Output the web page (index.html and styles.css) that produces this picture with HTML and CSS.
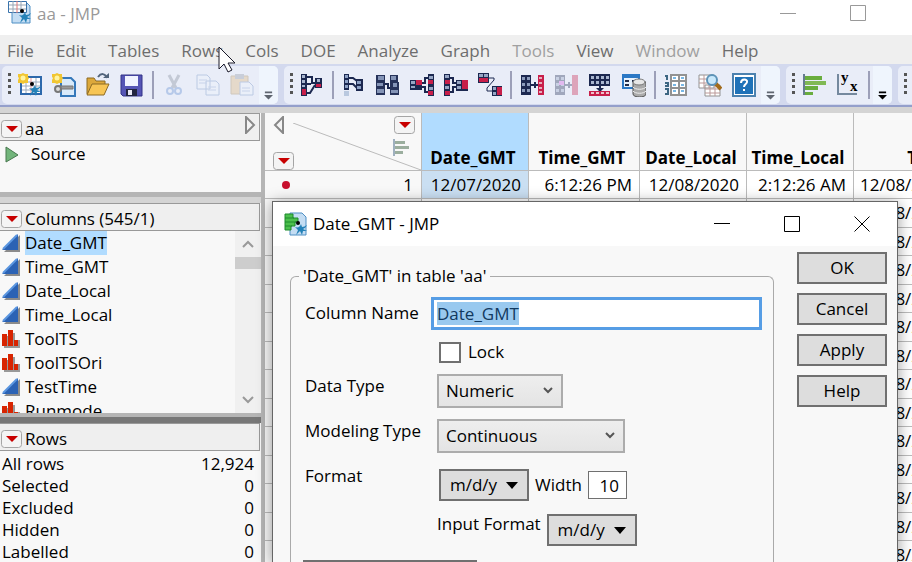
FILE: index.html
```html
<!DOCTYPE html>
<html lang="en">
<head>
    <meta charset="UTF-8">
    <meta name="viewport" content="width=device-width, initial-scale=1.0">
    <title>aa - JMP</title>
    <link rel="stylesheet" href="styles.css">
</head>
<body>
<!-- shared icons -->
<svg class="sprite" aria-hidden="true">
    <symbol id="hotspot" viewBox="0 0 21 18">
        <rect x="0.5" y="0.5" width="20" height="17" rx="3" fill="#f4f4f4" stroke="#a5a5a5"/>
        <path d="M5 6h12l-6 6z" fill="#c80000"/>
    </symbol>
    <symbol id="continuous" viewBox="0 0 18 18">
        <path d="M18 1v17H2l2-2h12V3z" fill="#8b8b8b"/>
        <path d="M0 16L16 0v16z" fill="#2b62b4"/>
        <path d="M1 15L15 1" stroke="#5b96e0" stroke-width="2"/>
    </symbol>
    <symbol id="nominal" viewBox="0 0 18 18">
        <path d="M2 6h5V3h6v7h5v8H2z" fill="#999"/>
        <path d="M0 4h5v12H0zM6 0h5v16H6zM12 10h4v6h-4z" fill="#d82400"/>
    </symbol>
    <symbol id="jmpfigure" viewBox="0 0 24 24">
        <path d="M11 15c3 1 5 0 6-3l1 3c2 0 3-1 5-2-1 2-2 3-4 4l4 2h-4l-1 4-2-4-4 4 2-5z" fill="#2482b8"/>
        <circle cx="14" cy="11" r="2" fill="#000"/>
    </symbol>
    <symbol id="cells" viewBox="0 0 10 20">
        <path d="M0 0h10v20H0z" fill="#1c2850"/>
        <path d="M1 2h3v3H1zM6 2h3v3H6zM1 8h3v3H1zM6 8h3v3H6zM1 14h3v3H1zM6 14h3v3H6z" fill="#8d9dbd"/>
    </symbol>
</svg>

<header class="title-bar">
    <svg class="app-icon" viewBox="0 0 24 24">
        <path d="M4 2h14l4 4v17H4z" fill="#c4ddf3" stroke="#4f8fc4"/>
        <path d="M0.500 1.500h18v11h-18z" fill="#fff" stroke="#3973ac"/>
        <path d="M1 5h17M1 9h17M5 1v12M13 1v12" stroke="#98a6b5"/>
        <path d="M9 1v12" stroke="#e27878"/>
        <use href="#jmpfigure"/>
    </svg>
    <h1>aa - JMP</h1>
    <div class="window-controls">
        <button title="Minimize"><svg viewBox="0 0 16 16"><path d="M0 8.500h16"/></svg></button>
        <button title="Maximize"><svg viewBox="0 0 16 16"><path d="M0.500 0.500h15v15h-15z"/></svg></button>
    </div>
</header>

<nav class="menu-bar">
    <button>File</button>
    <button>Edit</button>
    <button>Tables</button>
    <button>Rows</button>
    <button>Cols</button>
    <button>DOE</button>
    <button>Analyze</button>
    <button>Graph</button>
    <button class="dim">Tools</button>
    <button>View</button>
    <button class="dim">Window</button>
    <button>Help</button>
</nav>

<div class="toolbar">
    <div class="tool-group">
        <span class="grip"></span>
        <button title="New data table"><svg viewBox="0 0 24 24">
            <path d="M3 4h20v17H3z" fill="#fff" stroke="#2d68ab" stroke-width="2"/>
            <path d="M4 9h18M4 13h18M4 17h18M8 5v15M18 5v15" stroke="#9aaabd"/><path d="M13 5v15" stroke="#e59999"/>
            <use href="#jmpfigure"/>
            <path d="M0 1h3l2-1 2 1h3v3l1 1-1 2v3H7l-2 1-2-1H0V7l1-2-1-1z" fill="#f1c632"/><circle cx="5" cy="5" r="2.500" fill="#fff4a0"/>
        </svg></button>
        <button title="New script"><svg viewBox="0 0 24 24">
            <path d="M9 5h10l4 4v14H9z" fill="#d9eafa" stroke="#3578ba" stroke-width="2"/>
            <path d="M7 13h14v3H9" fill="#999" stroke="#777"/>
            <circle cx="6" cy="16" r="3" fill="#ddd" stroke="#777" stroke-width="2"/>
            <path d="M0 1h3l2-1 2 1h3v3l1 1-1 2v3H7l-2 1-2-1H0V7l1-2-1-1z" fill="#f1c632"/><circle cx="5" cy="5" r="2.500" fill="#fff4a0"/>
        </svg></button>
        <button title="Open"><svg viewBox="0 0 24 24">
            <path d="M1 21V5h7l2 3h9v4" fill="#dca83b" stroke="#8c6a24"/>
            <path d="M1 22l5-11h17l-5 11z" fill="#f7c555" stroke="#8c6a24"/>
            <path d="M12 4c3-4 7-4 9 1" fill="none" stroke="#52647b" stroke-width="2"/><path d="M17 5h6V0z" fill="#52647b"/>
        </svg></button>
        <button title="Save"><svg viewBox="0 0 24 24">
            <path d="M1 2h21v21H3l-2-2z" fill="#5555b5" stroke="#333387"/>
            <path d="M5 3h13v10H5z" fill="#f0f3ff"/><path d="M6 16h11v7H6z" fill="#222540"/><path d="M8 17h4v5H8z" fill="#e8e8f5"/>
        </svg></button>
        <span class="separator"></span>
        <button title="Cut" disabled><svg viewBox="0 0 24 24" class="faded">
            <path d="M7 2l7 13M17 2l-7 13" stroke="#7e8797" stroke-width="3"/>
            <circle cx="8" cy="18" r="3" fill="none" stroke="#5a88cf" stroke-width="2"/><circle cx="16" cy="18" r="3" fill="none" stroke="#5a88cf" stroke-width="2"/>
        </svg></button>
        <button title="Copy" disabled><svg viewBox="0 0 24 24" class="faded">
            <path d="M1 2h10l3 3v11H1zM10 8h10l3 3v11H10z" fill="#eef3fb" stroke="#6b8cc0"/>
            <path d="M3 7h8M3 10h8M12 14h8M12 17h8" stroke="#8aa6d2"/>
        </svg></button>
        <button title="Paste" disabled><svg viewBox="0 0 24 24" class="faded">
            <path d="M1 3h17v18H1z" fill="#dfb676" stroke="#a38352"/><path d="M5 1h9v5H5z" fill="#9097a0"/>
            <path d="M10 9h9l4 4v9H10z" fill="#eef3fb" stroke="#6b8cc0"/><path d="M12 15h8M12 18h8" stroke="#8aa6d2"/>
        </svg></button>
        <button class="more" title="More"><svg viewBox="0 0 10 9"><path d="M1 0h8v2H1zM0 4h10L5 9z"/></svg></button>
    </div>

    <div class="tool-group">
        <span class="grip"></span>
        <button title="Summary"><svg viewBox="0 0 24 24">
            <path d="M6 4h6v6h5M6 11h5M6 20h4l5-8" fill="none" stroke="#1c2850" stroke-width="2"/>
            <path d="M1 1h6v22H1zM15 5h7v10h-7z" fill="#1c2850"/>
            <path d="M2 2h3v3H2zM2 7h3v3H2zM2 12h3v2H2zM17 6h3v3h-3z" fill="#a9b6cf"/><path d="M2 16h4v6H2zM16 11h5v3h-5z" fill="#c81f4a"/>
        </svg></button>
        <span class="separator"></span>
        <button title="Subset"><svg viewBox="0 0 24 24">
            <path d="M6 5h5l4 3M6 11h5l4 4" fill="none" stroke="#1c2850" stroke-width="2"/>
            <path d="M2 1h5v16H2zM14 6h7v12h-7z" fill="#1c2850"/>
            <path d="M3 2h3v3H3zM3 7h3v3H3zM3 12h3v3H3zM15 8h4v3h-4zM15 13h4v3h-4z" fill="#8da1c5"/><path d="M2 18h5v5H2z" fill="#b9c8df"/>
        </svg></button>
        <button title="Sort"><svg viewBox="0 0 24 24">
            <path d="M8 11h4v4h4" fill="none" stroke="#1c2850" stroke-width="2"/>
            <path d="M0 2h9v20H0zM14 2h8v7h1v13H14z" fill="#26325a"/>
            <path d="M2 3h6v4H2zM1 10h6v3H1zM1 16h7v4H1zM15 3h5v4h-5zM17 10h4v4h-4zM15 17h7v3h-7z" fill="#8494b7"/>
        </svg></button>
        <button title="Stack"><svg viewBox="0 0 24 24">
            <path d="M11 10h4V5h4M11 14h4v5h4" fill="none" stroke="#1c2850" stroke-width="2"/>
            <path d="M0 7h12v10H0zM18 1h6v22h-6z" fill="#1c2850"/>
            <path d="M1 8h4v3H1zM1 13h4v2H1zM19 3h4v3h-4zM19 14h4v3h-4z" fill="#97a6c4"/><path d="M6 7h6v5H6zM18 7h5v4h-5zM18 18h5v4h-5z" fill="#c81f4a"/>
        </svg></button>
        <button title="Split"><svg viewBox="0 0 24 24">
            <path d="M5 5h4v5h4M5 19h4v-5h4" fill="none" stroke="#1c2850" stroke-width="2"/>
            <path d="M0 1h6v22H0zM12 7h12v11H12z" fill="#1c2850"/>
            <path d="M1 2h4v3H1zM1 13h4v3H1zM13 8h4v3h-4zM13 13h4v3h-4z" fill="#97a6c4"/><path d="M1 7h5v4H1zM1 18h5v4H1zM18 7h6v9h-6z" fill="#c81f4a"/>
        </svg></button>
        <button title="Transpose"><svg viewBox="0 0 24 24">
            <path d="M10 5h6v2L9 15v3h6" fill="none" stroke="#1c2850"/>
            <path d="M0 0h11v10H0zM14 13h10v10H14z" fill="#1c2850"/>
            <path d="M1 1h4v3H1zM6 1h4v3H6zM15 14h3v3h-3zM15 19h3v3h-3z" fill="#97a6c4"/><path d="M1 5h9v4H1zM19 14h5v8h-5z" fill="#c81f4a"/>
        </svg></button>
        <span class="separator"></span>
        <button title="Join"><svg viewBox="0 0 24 24">
            <use href="#cells" width="12" height="20" y="2"/><path d="M10 12h10M15 9v6" stroke="#1c2850" stroke-width="2"/>
            <path d="M18 2h6v20h-6z" fill="#c81f4a"/><path d="M19 4h3v2h-3zM19 9h3v2h-3zM19 14h3v2h-3zM19 18h3v2h-3z" fill="#e5aebc"/>
        </svg></button>
        <button title="Update" disabled><svg viewBox="0 0 24 24" class="faded">
            <use href="#cells" width="12" height="20" y="2"/><path d="M10 12h10M15 9v6" stroke="#1c2850" stroke-width="2"/>
            <path d="M18 2h6v20h-6z" fill="#c81f4a"/><path d="M5 8h5v4H5z" fill="#d45be0"/>
        </svg></button>
        <button title="Concatenate"><svg viewBox="0 0 24 24">
            <path d="M1 1h21v12H1zM11 12h2v6h-2z" fill="#1c2850"/><path d="M8 15h8l-4 4z" fill="#1c2850"/>
            <path d="M3 3h3v3H3zM8 3h3v3H8zM13 3h3v3h-3zM18 3h3v3h-3zM3 8h3v3H3zM8 8h3v3H8zM13 8h3v3h-3zM18 8h3v3h-3z" fill="#a9b6cf"/>
            <path d="M1 18h21v5H1z" fill="#c81f4a"/><path d="M3 19h3v2H3zM8 19h3v2H8zM13 19h3v2h-3zM18 19h3v2h-3z" fill="#eec0ca"/>
        </svg></button>
        <button title="Query builder"><svg viewBox="0 0 24 24">
            <path d="M1 2h16v13H1z" fill="#e8f2fd" stroke="#2b78c5" stroke-width="2"/><path d="M1 2h16v3H1z" fill="#2b78c5"/>
            <path d="M3 8h4M10 8h5M3 12h4" stroke="#222c48" stroke-width="2"/>
            <path d="M11 9v12c0 4 13 4 13 0V9z" fill="#aaa" stroke="#555"/><ellipse cx="17" cy="9" rx="6" ry="3" fill="#e7e7e7" stroke="#777"/><path d="M11 14c2 3 11 3 13 0M11 18c2 3 11 3 13 0" fill="none" stroke="#eee"/>
        </svg></button>
        <span class="separator"></span>
        <button title="Recode"><svg viewBox="0 0 24 24">
            <path d="M1 3h2v4M1 10h3v3H1M1 16h3v5H1" fill="none" stroke="#3d6682" stroke-width="2"/>
            <path d="M7 2h15v20H7zM7 8h15M7 15h15M15 2v20" fill="#fff" stroke="#929292" stroke-width="2"/>
            <path d="M9 5h3M17 5h3M9 12h3M17 12h3M9 18h3M17 18h3" stroke="#78b7e5" stroke-width="2"/>
        </svg></button>
        <button title="Find"><svg viewBox="0 0 24 24">
            <path d="M1 2h15v13H1zM7 12h15v11H7z" fill="#fff" stroke="#929292"/><path d="M1 6h15M1 10h15M6 2v13M11 2v13M7 16h15M7 20h15M12 12v11M17 12v11" stroke="#b99"/>
            <path d="M17 10l6 6" stroke="#a36b19" stroke-width="4"/><circle cx="14" cy="7" r="5" fill="#c8e8fb" stroke="#5d93b8" stroke-width="2"/>
        </svg></button>
        <button title="Help"><svg viewBox="0 0 24 24">
            <path d="M1 1h22v22H1z" fill="#fff" stroke="#4b81af" stroke-width="2"/><path d="M3 4h18v17H3z" fill="#1f72b8"/>
            <path d="M9 10c0-5 7-4 6-1 0 2-3 2-3 5M12 16v2" fill="none" stroke="#fff" stroke-width="2"/>
        </svg></button>
        <button class="more" title="More"><svg viewBox="0 0 10 9"><path d="M1 0h8v2H1zM0 4h10L5 9z"/></svg></button>
    </div>

    <div class="tool-group">
        <span class="grip"></span>
        <button title="Distribution"><svg viewBox="0 0 24 24">
            <path d="M1 1h2v21H1z" fill="#667c91"/><path d="M3 3h17v4H3zM3 13h13v4H3zM3 19h8v3H3z" fill="#69ad3e"/><path d="M3 8h21v4H3z" fill="#80b954"/>
        </svg></button>
        <button title="Fit Y by X"><svg viewBox="0 0 24 24" class="axes">
            <path d="M2 1v20h19" fill="none" stroke="#75899e" stroke-width="2"/>
            <text x="5" y="9">y</text><text x="14" y="18">x</text>
        </svg></button>
        <span class="separator"></span>
        <button class="more dark" title="More"><svg viewBox="0 0 10 9"><path d="M1 0h8v2H1zM0 4h10L5 9z"/></svg></button>
    </div>

    <div class="tool-group last">
        <span class="grip"></span>
    </div>
</div>

<main class="workspace">
    <aside class="sidebar">
        <section class="panel table-panel">
            <div class="panel-header">
                <button class="hotspot" title="Table menu"><svg><use href="#hotspot"/></svg></button>
                <h2>aa</h2>
                <button class="collapse" title="Collapse"><svg viewBox="0 0 12 18"><path d="M2 1v16l8-8z"/></svg></button>
            </div>
            <button class="source">
                <svg viewBox="0 0 14 17"><path d="M1 1l12 8-12 7z" fill="#72b57b" stroke="#48784f"/></svg>
                Source
            </button>
        </section>

        <section class="panel columns-panel">
            <div class="panel-header">
                <button class="hotspot" title="Columns menu"><svg><use href="#hotspot"/></svg></button>
                <h2>Columns (545/1)</h2>
            </div>
            <div class="columns-body">
                <ul class="columns-list">
                    <li class="selected"><svg><use href="#continuous"/></svg><span>Date_GMT</span></li>
                    <li><svg><use href="#continuous"/></svg><span>Time_GMT</span></li>
                    <li><svg><use href="#continuous"/></svg><span>Date_Local</span></li>
                    <li><svg><use href="#continuous"/></svg><span>Time_Local</span></li>
                    <li><svg><use href="#nominal"/></svg><span>ToolTS</span></li>
                    <li><svg><use href="#nominal"/></svg><span>ToolTSOri</span></li>
                    <li><svg><use href="#continuous"/></svg><span>TestTime</span></li>
                    <li><svg><use href="#nominal"/></svg><span>Runmode</span></li>
                </ul>
                <div class="scrollbar">
                    <button title="Scroll up"><svg viewBox="0 0 12 8"><path d="M1 7l5-5 5 5"/></svg></button>
                    <div class="thumb"></div>
                    <button class="down" title="Scroll down"><svg viewBox="0 0 12 8"><path d="M1 1l5 5 5-5"/></svg></button>
                </div>
            </div>
        </section>

        <section class="panel rows-panel">
            <div class="panel-header">
                <button class="hotspot" title="Rows menu"><svg><use href="#hotspot"/></svg></button>
                <h2>Rows</h2>
            </div>
            <dl class="row-counts">
                <dt>All rows</dt><dd>12,924</dd>
                <dt>Selected</dt><dd>0</dd>
                <dt>Excluded</dt><dd>0</dd>
                <dt>Hidden</dt><dd>0</dd>
                <dt>Labelled</dt><dd>0</dd>
            </dl>
        </section>
    </aside>

    <div class="data-area">
        <table class="data-grid">
            <colgroup>
                <col class="col-number"><col class="col-date"><col class="col-time"><col class="col-local"><col class="col-local"><col class="col-stamp">
            </colgroup>
            <thead>
                <tr>
                    <td>
                        <div class="corner">
                            <button class="collapse" title="Hide panels"><svg viewBox="0 0 12 18"><path d="M10 1v16L2 9z"/></svg></button>
                            <svg class="diagonal" viewBox="0 0 128 47" preserveAspectRatio="none"><path d="M0 0l128 47"/></svg>
                            <div class="corner-right">
                                <button class="hotspot" title="Column menu"><svg><use href="#hotspot"/></svg></button>
                                <svg class="histogram" viewBox="0 0 17 17"><path d="M0 0h2v17H0z" fill="#9fb0bf"/><path d="M2 2h10v3H2zM2 7h14v3H2zM2 12h8v3H2z" fill="#9bae9e"/></svg>
                            </div>
                            <button class="hotspot row-menu" title="Row menu"><svg><use href="#hotspot"/></svg></button>
                        </div>
                    </td>
                    <th class="active">Date_GMT</th>
                    <th>Time_GMT</th>
                    <th>Date_Local</th>
                    <th>Time_Local</th>
                    <th>ToolTS</th>
                </tr>
            </thead>
            <tbody>
                <tr><td><div class="row-number"><span class="marker"></span>1</div></td><td class="active">12/07/2020</td><td>6:12:26 PM</td><td>12/08/2020</td><td>2:12:26 AM</td><td>12/08/2020</td></tr>
                <tr><td></td><td></td><td></td><td></td><td></td><td>12/08/2020</td></tr>
                <tr><td></td><td></td><td></td><td></td><td></td><td>12/08/2020</td></tr>
                <tr><td></td><td></td><td></td><td></td><td></td><td>12/08/2020</td></tr>
                <tr><td></td><td></td><td></td><td></td><td></td><td>12/08/2020</td></tr>
                <tr><td></td><td></td><td></td><td></td><td></td><td>12/08/2020</td></tr>
                <tr><td></td><td></td><td></td><td></td><td></td><td>12/08/2020</td></tr>
                <tr><td></td><td></td><td></td><td></td><td></td><td>12/08/2020</td></tr>
                <tr><td></td><td></td><td></td><td></td><td></td><td>12/08/2020</td></tr>
                <tr><td></td><td></td><td></td><td></td><td></td><td>12/08/2020</td></tr>
                <tr><td></td><td></td><td></td><td></td><td></td><td>12/08/2020</td></tr>
                <tr><td></td><td></td><td></td><td></td><td></td><td>12/08/2020</td></tr>
                <tr><td></td><td></td><td></td><td></td><td></td><td>12/08/2020</td></tr>
                <tr><td></td><td></td><td></td><td></td><td></td><td>12/08/2020</td></tr>
            </tbody>
        </table>
    </div>
</main>

<!-- column info window -->
<form class="dialog">
    <div class="dialog-title">
        <svg class="app-icon" viewBox="0 0 24 24">
            <path d="M6 1h12l4 4v18H6z" fill="#c4ddf3" stroke="#4f8fc4"/>
            <path d="M1 2h8v4h5v4h-3v4H7v4H1z" fill="#4cc04c" stroke="#1c8a2c"/>
            <path d="M1 6h9M1 10h11M1 14h7" stroke="#1c8a2c"/>
            <use href="#jmpfigure"/>
        </svg>
        <h2>Date_GMT - JMP</h2>
        <div class="window-controls">
            <button type="button" title="Minimize"><svg viewBox="0 0 16 16"><path d="M0 7.500h16"/></svg></button>
            <button type="button" title="Maximize"><svg viewBox="0 0 16 16"><path d="M0.500 0.500h15v15h-15z"/></svg></button>
            <button type="button" title="Close"><svg viewBox="0 0 16 16"><path d="M0.500 0.500l15 15M15.500 0.500l-15 15"/></svg></button>
        </div>
    </div>
    <div class="dialog-body">
        <fieldset>
            <legend>'Date_GMT' in table 'aa'</legend>
            <div class="fields">
                <label for="column-name" class="name-label">Column Name</label>
                <input type="text" id="column-name" value="Date_GMT">

                <div class="lock">
                    <input type="checkbox" id="lock">
                    <label for="lock">Lock</label>
                </div>

                <label for="data-type">Data Type</label>
                <select id="data-type" class="short">
                    <option>Numeric</option>
                    <option>Character</option>
                </select>

                <label for="modeling-type">Modeling Type</label>
                <select id="modeling-type">
                    <option>Continuous</option>
                    <option>Ordinal</option>
                    <option>Nominal</option>
                </select>

                <label for="format">Format</label>
                <div class="format-line">
                    <button type="button" id="format" class="menu-button">m/d/y <svg viewBox="0 0 12 7"><path d="M0 0h12L6 7z"/></svg></button>
                    <label for="width">Width</label>
                    <input type="text" id="width" value="10">
                </div>

                <div class="input-format">
                    <label for="input-format">Input Format</label>
                    <button type="button" id="input-format" class="menu-button">m/d/y <svg viewBox="0 0 12 7"><path d="M0 0h12L6 7z"/></svg></button>
                </div>
            </div>
            <button type="button" class="properties" title="Column Properties"></button>
        </fieldset>
        <div class="dialog-actions">
            <button type="button">OK</button>
            <button type="button">Cancel</button>
            <button type="button">Apply</button>
            <button type="button">Help</button>
        </div>
    </div>
</form>

<svg class="cursor" viewBox="0 0 19 28"><path d="M1 1v22l5-5 4 8 4-2-4-7h7z" fill="#fff" stroke="#1a1a2a"/></svg>

<script src="script.js"></script>
</body>
</html>
```

FILE: styles.css
```css
* {
    margin: 0;
    padding: 0;
    box-sizing: border-box;
}

body {
    display: flex;
    flex-direction: column;
    height: 100vh;
    overflow: hidden;
    position: relative;
    background-color: #d4d4d4;
    color: #000;
    font-family: 'Open Sans', 'Noto Sans', sans-serif;
    font-size: 17px;
    line-height: 24px;
}

button, input, select {
    font: inherit;
    color: inherit;
}

button {
    background: none;
    border: none;
}

h1, h2 {
    font-size: 17px;
    font-weight: 400;
}

svg {
    display: block;
}

.sprite {
    position: absolute;
    width: 0;
    height: 0;
}

/* title bar */
.title-bar {
    display: flex;
    align-items: flex-start;
    height: 35px;
    flex-shrink: 0;
    padding: 0 19px 0 8px;
    background-color: #fff;
    color: #999;
}

.title-bar h1 {
    padding-top: 2px;
}

.app-icon {
    width: 24px;
    height: 24px;
    margin-right: 5px;
}

.window-controls {
    display: flex;
    margin-left: auto;
}

.window-controls button {
    width: 70px;
    height: 26px;
    display: flex;
    align-items: center;
    justify-content: center;
}

.window-controls svg {
    width: 16px;
    height: 16px;
    fill: none;
    stroke: currentColor;
}

/* menu */
.menu-bar {
    display: flex;
    flex-shrink: 0;
    gap: 22px;
    height: 29px;
    padding: 2px 7px 0;
    background-color: #efefef;
    color: #6d6d6d;
}

.menu-bar .dim {
    color: #a0a0a0;
}

/* toolbar */
.toolbar {
    display: flex;
    flex-shrink: 0;
    gap: 6px;
    padding: 2px 0 1px 2px;
    background-color: #d3d9ee;
    border-bottom: 2px solid #949fcb;
    overflow: hidden;
}

.tool-group {
    display: flex;
    align-items: center;
    height: 38px;
    flex-shrink: 0;
    border-radius: 5px;
    background-color: #e9edf8;
}

.tool-group.last {
    width: 40px;
}

.grip {
    width: 3px;
    height: 21px;
    margin: 0 2px 4px 6px;
    background: repeating-linear-gradient(#555 0 3px, transparent 3px 6px);
}

.tool-group button {
    width: 34px;
    height: 38px;
    display: flex;
    align-items: center;
    justify-content: center;
}

.tool-group button svg {
    width: 24px;
    height: 24px;
}

.axes text {
    font: bold 15px 'Liberation Serif', serif;
}

.faded {
    opacity: 0.35;
}

.separator {
    width: 2px;
    height: 28px;
    margin: 0 3px;
    background-color: #9c9fb8;
}

.tool-group .more {
    width: 19px;
    align-items: flex-end;
    padding-bottom: 4px;
    border-radius: 0 5px 5px 0;
    background-color: #eff5fd;
    color: #5f6670;
}

.tool-group .more svg {
    width: 9px;
    height: 9px;
    fill: currentColor;
}

.tool-group .dark {
    color: #000;
}

/* workspace */
.workspace {
    display: flex;
    flex: 1;
    min-height: 0;
    padding-top: 6px;
}

.sidebar {
    width: 265px;
    flex-shrink: 0;
    display: flex;
    flex-direction: column;
    border-right: 4px solid #b5b5b5;
}

.panel {
    background-color: #f8f8f8;
    flex-shrink: 0;
}

.panel-header {
    display: flex;
    align-items: center;
    height: 28px;
    margin-right: 1px;
    padding: 3px 3px 0 1px;
    background-color: #efefef;
    border: 1px solid #999;
    border-left: none;
}

.panel-header h2 {
    margin-left: 3px;
}

.hotspot svg {
    width: 21px;
    height: 18px;
}

.collapse svg {
    width: 12px;
    height: 18px;
    fill: #f4f4f4;
    stroke: #888;
    stroke-width: 2;
}

.panel-header .collapse {
    margin: 0 0 7px auto;
}

.table-panel {
    margin-bottom: 6px;
    padding-bottom: 26px;
    border-bottom: 5px solid #b5b5b5;
}

.source {
    display: flex;
    align-items: center;
    gap: 12px;
    padding: 1px 0 0 5px;
}

.source svg {
    width: 14px;
    height: 17px;
}

.columns-panel {
    border-bottom: 4px solid #b5b5b5;
}

.columns-body {
    display: flex;
    height: 182px;
}

.columns-list {
    flex: 1;
    overflow: hidden;
    list-style: none;
}

.columns-list li {
    display: flex;
    align-items: center;
    gap: 5px;
    padding-left: 2px;
}

.columns-list svg {
    width: 18px;
    height: 18px;
}

.columns-list .selected span {
    background-color: #b1dcff;
}

.scrollbar {
    width: 26px;
    display: flex;
    flex-direction: column;
    background-color: #f0f0f0;
}

.scrollbar button {
    height: 26px;
    display: flex;
    align-items: center;
    justify-content: center;
}

.scrollbar svg {
    width: 12px;
    height: 8px;
    fill: none;
    stroke: #999;
    stroke-width: 2;
}

.scrollbar .thumb {
    height: 12px;
    background-color: #cdcdcd;
}

.scrollbar .down {
    margin-top: auto;
}

.rows-panel {
    flex: 1;
    border-top: 6px solid #777;
}

.row-counts {
    display: grid;
    grid-template-columns: 1fr auto;
    padding: 2px 7px 0 2px;
    line-height: 22px;
}

.row-counts dd {
    text-align: right;
}

/* data table */
.data-area {
    flex: 1;
    min-width: 0;
    overflow: hidden;
    background-color: #fff;
}

.data-grid {
    width: 756px;
    table-layout: fixed;
    border-collapse: separate;
    border-spacing: 0;
}

.col-number {
    width: 157px;
}

.col-date {
    width: 107px;
}

.col-time {
    width: 111px;
}

.col-local {
    width: 107px;
}

.data-grid th,
.data-grid td {
    border-right: 1px solid #bbb;
    border-bottom: 1px solid #bbb;
}

.data-grid thead {
    background-color: #f8f8f8;
}

.data-grid th {
    height: 58px;
    padding-right: 4px;
    vertical-align: bottom;
    font-weight: 700;
}

.data-grid tbody td {
    height: 28px;
    padding-right: 7px;
    text-align: right;
    white-space: nowrap;
}

.data-grid tbody tr:nth-child(even) td {
    height: 29px;
}

.data-grid tbody td:first-child {
    padding-right: 8px;
    background-color: #f8f8f8;
}

.data-grid tbody td:last-child {
    padding-left: 6px;
    text-align: left;
}

.data-grid th.active {
    background-color: #b1dcff;
}

.data-grid tbody td.active {
    background-color: #cadff2;
}

.corner {
    display: grid;
    grid-template-columns: auto 1fr;
    position: relative;
    height: 57px;
    padding: 3px 6px 0 8px;
}

.corner .row-menu {
    align-self: end;
}

.corner-right {
    display: flex;
    flex-direction: column;
    align-items: flex-end;
    gap: 5px;
    grid-row: 1 / 3;
    grid-column: 2;
}

.corner .collapse {
    justify-self: start;
    align-self: start;
}

.histogram {
    width: 17px;
    height: 17px;
    margin-right: 5px;
}

/* line runs behind the corner buttons */
.diagonal {
    position: absolute;
    right: 0;
    bottom: 0;
    width: 128px;
    height: 47px;
    fill: none;
    stroke: #bbb;
}

.row-number {
    display: flex;
    align-items: center;
    justify-content: space-between;
    padding-left: 17px;
}

.marker {
    width: 8px;
    height: 8px;
    border-radius: 50%;
    background-color: #c8102e;
}

/* dialog */
.dialog {
    position: absolute;
    top: 201px;
    left: 272px;
    right: 14px;
    bottom: 0;
    display: flex;
    flex-direction: column;
    overflow: hidden;
    background-color: #f8f8f8;
    border: 1px solid #666;
    border-bottom: none;
    box-shadow: 0 2px 14px rgba(0, 0, 0, 0.4);
}

.dialog-title {
    display: flex;
    align-items: center;
    height: 44px;
    flex-shrink: 0;
    padding-left: 11px;
    background-color: #fff;
}

.dialog-body {
    display: flex;
    flex: 1;
    gap: 23px;
    padding: 6px 10px 0 17px;
}

fieldset {
    flex: 1;
    min-width: 0;
    margin-top: 12px;
    padding: 9px 11px 0 14px;
    border: 1px solid #aaa;
    border-bottom: none;
    border-radius: 6px 6px 0 0;
}

legend {
    margin-left: -6px;
    padding: 0 4px;
}

.fields {
    display: grid;
    grid-template-columns: 126px 1fr;
    align-items: start;
    row-gap: 11px;
}

.fields > label {
    white-space: nowrap;
}

.fields > .name-label {
    padding-top: 4px;
}

.fields > select,
.lock,
.format-line,
.input-format {
    margin-left: 6px;
}

.lock,
.input-format {
    grid-column: 2;
}

#column-name {
    width: 100%;
    height: 33px;
    padding: 0 3px;
    background-color: #fff;
    border: 3px solid #569de5;
    outline: none;
}

#column-name::selection {
    background-color: #99c9ef;
    color: #12395f;
}

.lock {
    display: flex;
    align-items: center;
    gap: 7px;
    height: 22px;
    padding-left: 2px;
}

.lock input {
    appearance: none;
    width: 22px;
    height: 21px;
    background-color: #fff;
    border: 2px solid #707070;
}

select {
    appearance: none;
    width: 188px;
    height: 34px;
    padding-left: 7px;
    border: 2px solid #acacac;
    background: url("data:image/svg+xml,%3Csvg xmlns='http://www.w3.org/2000/svg' width='10' height='7'%3E%3Cpath d='M1 1l4 4 4-4' fill='none' stroke='%23555' stroke-width='2'/%3E%3C/svg%3E") no-repeat right 8px top 11px, linear-gradient(#eee, #e4e4e4);
}

select.short {
    width: 126px;
}

.format-line,
.input-format {
    display: flex;
    align-items: center;
}

.format-line {
    gap: 6px;
    padding: 5px 0 0 2px;
}

.input-format {
    gap: 6px;
}

.input-format label {
    margin-bottom: 12px;
}

.menu-button {
    display: flex;
    align-items: center;
    justify-content: center;
    gap: 9px;
    width: 90px;
    height: 32px;
    background-color: #ddd;
    border: 2px solid #707070;
}

.menu-button svg {
    width: 12px;
    height: 7px;
}

#width {
    width: 39px;
    height: 28px;
    padding-right: 7px;
    text-align: right;
    background-color: #fff;
    border: 1px solid #707070;
}

.properties {
    width: 174px;
    height: 32px;
    margin: 12px 0 0 -2px;
    background-color: #ddd;
    border: 2px solid #707070;
}

.dialog-actions {
    display: flex;
    flex-direction: column;
    gap: 9px;
    width: 90px;
}

.dialog-actions button {
    height: 32px;
    background-color: #ddd;
    border: 2px solid #707070;
}

/* mouse pointer */
.cursor {
    position: absolute;
    top: 46px;
    left: 218px;
    width: 19px;
    height: 28px;
}
```

FILE: script.js
```js
var columnName = document.getElementById('column-name');
columnName.focus({ preventScroll: true });
columnName.select();
```
